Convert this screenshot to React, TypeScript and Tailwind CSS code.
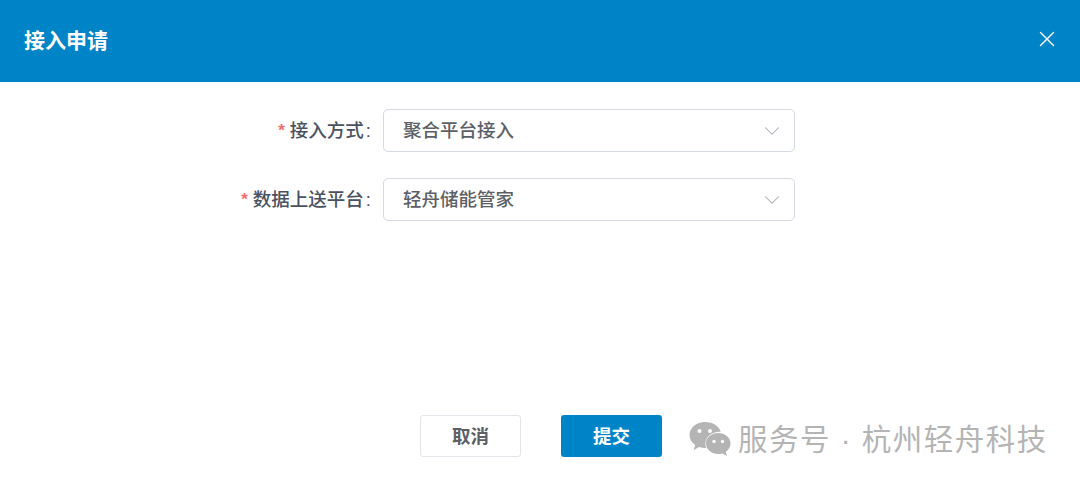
import { X, ChevronDown } from "lucide-react";

const cjk = "font-['Liberation_Sans','Noto_Sans_CJK_SC',sans-serif]";

type RowProps = {
  label: string;
  value: string;
};

const FormRow = ({ label, value }: RowProps) => {
  return (
    <div className="flex items-center h-[43px]">
      <label className="w-[383px] pr-[12px] pt-[1px] flex justify-end items-center text-[18.5px] font-medium text-[#4a5262]">
        <span className="text-[#f56c6c] mr-[5px] text-[17px] font-bold">*</span>
        {label}
        <span className="ml-[2px]">:</span>
      </label>
      <div className="w-[412px] h-[43px] flex items-center justify-between pl-[19px] pr-[9px] bg-white border border-[#d5dae2] rounded-[5px] text-[18.5px] font-medium text-[#5c6066]">
        <span className="pt-[1px]">{value}</span>
        <ChevronDown size={26} strokeWidth={0.95} className="text-[#a4a9b3]" />
      </div>
    </div>
  );
};

const WeChatMark = () => (
  <svg width="42" height="34" viewBox="0 0 42 34" fill="#b4b4b4">
    <path d="M16 0C7.5 0 0.5 5.7 0.5 13c0 4.1 2.2 7.6 5.7 10L4.6 28l5.6-2.9c1.9.6 3.8.9 5.8.9h1.1c-.5-1.4-.7-2.8-.7-4.2 0-6.8 6.300-12.100 14.300-12.100h1C30.200 4 23.700 0 16 0z" />
    <path d="M41.500 21.500C41.500 15.600 35.800 11 29.200 11S17 15.600 17 21.500 22.600 32 29.200 32c1.400 0 2.800-.2 4.100-.6L38 34l-1.200-4.100c2.800-2 4.700-5 4.700-8.400z" />
    <circle cx="10.500" cy="9" r="2" fill="#fff" />
    <circle cx="21" cy="9" r="2" fill="#fff" />
    <circle cx="25" cy="19.500" r="1.700" fill="#fff" />
    <circle cx="33.500" cy="19.500" r="1.700" fill="#fff" />
  </svg>
);

const App = () => {
  return (
    <div className={`relative w-[1080px] h-[482px] flex flex-col bg-white overflow-hidden ${cjk}`}>
      <header className="h-[82px] shrink-0 bg-[#0084c8] flex items-center justify-between pl-[24px] pr-[20px] text-white">
        <h1 className="text-[21px] font-bold">接入申请</h1>
        <X size={26} strokeWidth={1.3} className="mb-[4px]" />
      </header>

      <form className="flex-1 flex flex-col gap-[26px] pt-[27px]">
        <FormRow label="接入方式" value="聚合平台接入" />
        <FormRow label="数据上送平台" value="轻舟储能管家" />
      </form>

      <footer className="flex gap-[40px] pl-[420px] pb-[25px]">
        <button
          type="button"
          className="w-[101px] h-[42px] pt-[2px] bg-white border border-[#e2e5ea] rounded-[3px] text-[18.5px] font-bold text-[#5c5f63]"
        >
          取消
        </button>
        <button
          type="button"
          className="w-[101px] h-[42px] pt-[2px] bg-[#0084c8] rounded-[3px] text-[18.5px] font-bold text-white"
        >
          提交
        </button>
      </footer>

      <div className="absolute left-[689px] top-[421px] flex items-center gap-[7px] text-[#b4b4b4] text-[29.5px] leading-[34px] tracking-[1.5px] whitespace-nowrap">
        <WeChatMark />
        <span className="pt-[2px]">服务号 · 杭州轻舟科技</span>
      </div>
    </div>
  );
};

export default App;
